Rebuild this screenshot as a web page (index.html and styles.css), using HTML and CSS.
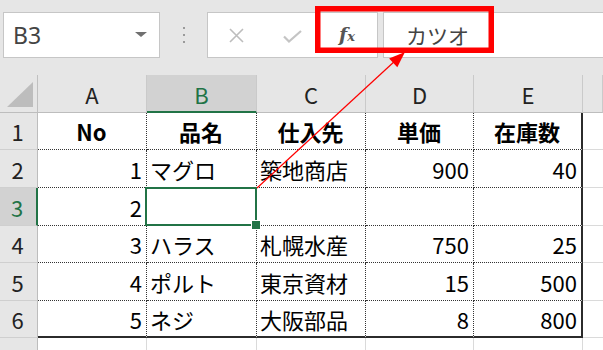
FILE: index.html
```html
<!DOCTYPE html>
<html lang="ja">
<head>
<meta charset="utf-8">
<link rel="stylesheet" href="styles.css">
</head>
<body>
<div class="app">
  <div class="toolbar">
    <div class="namebox"><span class="name">B3</span><span class="caret"></span></div>
    <div class="grip"><i></i><i></i><i></i></div>
    <div class="fbtns">
      <svg class="ico-x" width="17" height="17" viewBox="0 0 17 17"><path d="M2 2L15 15M15 2L2 15" stroke="#bdbdbd" stroke-width="1.6" fill="none"/></svg>
      <svg class="ico-ok" width="19" height="13" viewBox="0 0 19 13"><path d="M1 6.5L6 11.5L18 1" stroke="#c4c4c4" stroke-width="2.2" fill="none"/></svg>
      <span class="fx">f<span class="fxs">x</span></span>
    </div>
    <div class="ftext">カツオ</div>
  </div>
  <div class="sheet">
    <div class="corner"><span class="tri"></span></div>
    <div class="ch">A</div>
    <div class="ch on">B</div>
    <div class="ch">C</div>
    <div class="ch">D</div>
    <div class="ch">E</div>
    <div class="ch"></div>

    <div class="rh">1</div>
    <div class="c h">No</div>
    <div class="c h">品名</div>
    <div class="c h">仕入先</div>
    <div class="c h">単価</div>
    <div class="c h re">在庫数</div>
    <div class="g"></div>

    <div class="rh">2</div>
    <div class="c n">1</div>
    <div class="c t">マグロ</div>
    <div class="c t">築地商店</div>
    <div class="c n">900</div>
    <div class="c n re">40</div>
    <div class="g"></div>

    <div class="rh on">3</div>
    <div class="c n">2</div>
    <div class="c t active"><span class="selbox"></span><span class="handle"></span></div>
    <div class="c t"></div>
    <div class="c n"></div>
    <div class="c n re"></div>
    <div class="g"></div>

    <div class="rh">4</div>
    <div class="c n">3</div>
    <div class="c t">ハラス</div>
    <div class="c t">札幌水産</div>
    <div class="c n">750</div>
    <div class="c n re">25</div>
    <div class="g"></div>

    <div class="rh">5</div>
    <div class="c n">4</div>
    <div class="c t">ポルト</div>
    <div class="c t">東京資材</div>
    <div class="c n">15</div>
    <div class="c n re">500</div>
    <div class="g"></div>

    <div class="rh">6</div>
    <div class="c n be">5</div>
    <div class="c t be">ネジ</div>
    <div class="c t be">大阪部品</div>
    <div class="c n be">8</div>
    <div class="c n re be">800</div>
    <div class="g"></div>

    <div class="rh r7">7</div>
    <div class="g v"></div>
    <div class="g v"></div>
    <div class="g v"></div>
    <div class="g v"></div>
    <div class="g v"></div>
    <div class="g"></div>
  </div>
  <svg class="annot" width="603" height="350" viewBox="0 0 603 350">
    <rect x="317.75" y="8.75" width="173.5" height="41.5" fill="none" stroke="#ff0000" stroke-width="5.5"/>
    <line x1="257" y1="188" x2="396" y2="60" stroke="#ff0000" stroke-width="1.2"/>
    <polygon points="405,52 397.3,67.2 389.1,58.4" fill="#ff0000"/>
  </svg>
</div>
</body>
</html>
```

FILE: styles.css
```css
html, body {
  margin: 0;
  padding: 0;
  background: #ffffff;
}
body {
  width: 603px;
  height: 350px;
  overflow: hidden;
  font-family: "Noto Sans CJK JP", "Noto Sans", sans-serif;
}
.app {
  position: relative;
  width: 603px;
  height: 350px;
  overflow: hidden;
}

/* ---------- formula bar ---------- */
.toolbar {
  height: 75px;
  background: #e6e6e6;
  display: flex;
  align-items: flex-start;
  padding-top: 12px;
  box-sizing: border-box;
}
.namebox {
  margin-left: 3px;
  width: 157px;
  height: 46px;
  box-sizing: border-box;
  background: #fff;
  border: 1px solid #c6c6c6;
  display: flex;
  align-items: center;
  padding-left: 9px;
}
.name {
  font-family: "Noto Sans", "Open Sans", sans-serif;
  font-size: 23px;
  color: #444;
  line-height: 1;
}
.caret {
  margin-left: auto;
  margin-right: 12px;
  width: 0;
  height: 0;
  border-left: 6px solid transparent;
  border-right: 6px solid transparent;
  border-top: 5px solid #707070;
  margin-top: -2px;
}
.grip {
  width: 47px;
  height: 46px;
  display: flex;
  flex-direction: column;
  align-items: center;
  justify-content: center;
  gap: 5px;
}
.grip i {
  display: block;
  width: 2px;
  height: 2px;
  background: #9a9a9a;
}
.fbtns {
  width: 171px;
  height: 46px;
  box-sizing: border-box;
  background: #fff;
  border: 1px solid #c6c6c6;
  display: flex;
  align-items: center;
  padding-left: 20px;
}
.ico-x { display: block; }
.ico-ok { display: block; margin-left: 38px; margin-top: 3px; }
.fx {
  margin-left: 37px;
  font-family: "DejaVu Serif", "Liberation Serif", serif;
  font-style: italic;
  font-weight: 700;
  font-size: 19px;
  color: #555;
  line-height: 1;
  margin-top: -1px;
}
.fxs {
  font-size: 13px;
}
.ftext {
  margin-left: 5px;
  flex: 1;
  height: 46px;
  box-sizing: border-box;
  background: #fff;
  border: 1px solid #c6c6c6;
  border-right: none;
  display: flex;
  align-items: center;
  padding-left: 22px;
  font-size: 21px;
  color: #444;
  line-height: 1;
}

/* ---------- sheet grid ---------- */
.sheet {
  display: grid;
  grid-template-columns: 38px 109px 110px 109px 108px 109px 1fr;
  grid-template-rows: 38px 37px 38px 38px 37px 38px 37px 37px;
  font-size: 22px;
  line-height: 1;
  color: #000;
}
.sheet > div {
  box-sizing: border-box;
  min-width: 0;
}
.corner {
  background: #e6e6e6;
  border-right: 1px solid #c0c0c0;
  border-bottom: 1px solid #bdbdbd;
  position: relative;
}
.tri {
  position: absolute;
  left: 7px;
  top: 7px;
  width: 0;
  height: 0;
  border-left: 26px solid transparent;
  border-bottom: 25px solid #bdbdbd;
}
.ch {
  background: #e6e6e6;
  border-right: 1px solid #cacaca;
  border-bottom: 1px solid #bdbdbd;
  display: flex;
  align-items: center;
  justify-content: center;
  color: #222;
  padding-top: 1px;
}
.ch.on {
  background: #d2d2d2;
  color: #217346;
  border-bottom: 2px solid #217346;
  padding-top: 2px;
}
.rh {
  background: #e6e6e6;
  border-right: 1px solid #bdbdbd;
  border-bottom: 1px solid #cfcfcf;
  display: flex;
  align-items: center;
  justify-content: center;
  color: #222;
  padding-right: 2px;
}
.rh.r7 {
  align-items: flex-start;
  padding-top: 8px;
}
.rh.on {
  background: #d2d2d2;
  color: #217346;
  border-right: 2px solid #217346;
}
.c {
  border-right: 1px dotted #333;
  border-bottom: 1px dotted #333;
  display: flex;
  align-items: center;
  padding: 0 4px 0 3px;
  white-space: nowrap;
}
.c.n { justify-content: flex-end; }
.c.t { justify-content: flex-start; }
.c.h { justify-content: center; font-weight: 700; }
.c.re { border-right: 2px solid #2b2b2b; }
.c.be { border-bottom: 2px solid #2b2b2b; }
.g {
  border-bottom: 1px solid #dadada;
}
.g.v {
  border-bottom: none;
  border-right: 1px solid #dadada;
}
.active {
  position: relative;
  z-index: 2;
}
.selbox {
  position: absolute;
  left: -2px;
  top: -1px;
  right: -1px;
  bottom: -1px;
  border: 2px solid #217346;
}
.handle {
  position: absolute;
  left: 104px;
  top: 32px;
  width: 10px;
  height: 10px;
  box-sizing: border-box;
  background: #217346;
  border: 1px solid #fff;
  z-index: 3;
}

/* ---------- annotation overlay ---------- */
.annot {
  position: absolute;
  left: 0;
  top: 0;
  z-index: 5;
  pointer-events: none;
}
```
